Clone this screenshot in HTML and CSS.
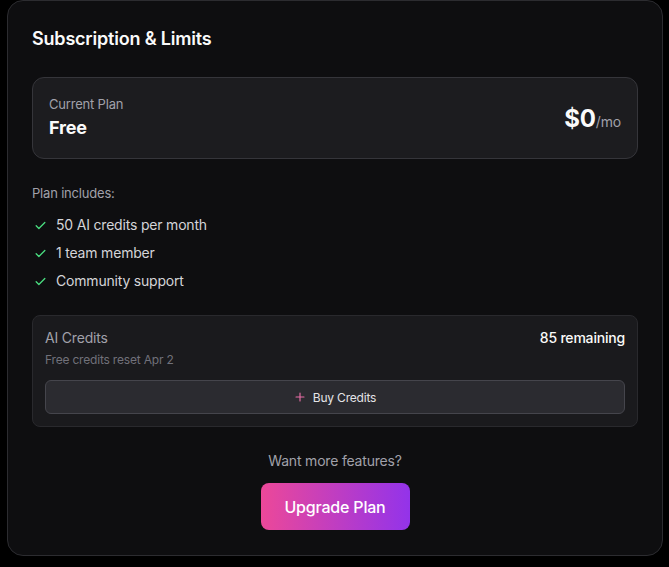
FILE: index.html
```html
<!DOCTYPE html>
<html lang="en">
<head>
  <meta charset="UTF-8" />
  <title>Subscription &amp; Limits</title>
  <link rel="stylesheet" href="styles.css">
</head>
<body>
  <div class="card">
    <h2 class="card-title">Subscription &amp; Limits</h2>

    <!-- current plan -->
    <div class="plan">
      <div>
        <div class="plan-label">Current Plan</div>
        <div class="plan-name">Free</div>
      </div>
      <div class="plan-price">$0<span>/mo</span></div>
    </div>

    <!-- features -->
    <p class="includes">Plan includes:</p>
    <ul class="features">
      <li>
        <svg viewBox="0 0 24 24" width="13" height="13"><path d="M4 12.5l5 5L20 6.5" /></svg>
        50 AI credits per month
      </li>
      <li>
        <svg viewBox="0 0 24 24" width="13" height="13"><path d="M4 12.5l5 5L20 6.5" /></svg>
        1 team member
      </li>
      <li>
        <svg viewBox="0 0 24 24" width="13" height="13"><path d="M4 12.5l5 5L20 6.5" /></svg>
        Community support
      </li>
    </ul>

    <!-- credits -->
    <div class="credits">
      <div class="credits-head">
        <span class="credits-label">AI Credits</span>
        <span class="credits-left">85 remaining</span>
      </div>
      <div class="credits-note">Free credits reset Apr 2</div>
      <button class="buy">
        <svg viewBox="0 0 24 24" width="12" height="12"><path d="M12 4v16M4 12h16" /></svg>
        Buy Credits
      </button>
    </div>

    <div class="upgrade">
      <p>Want more features?</p>
      <button class="upgrade-btn">Upgrade Plan</button>
    </div>
  </div>
</body>
</html>
```

FILE: styles.css
```css
* {
  box-sizing: border-box;
}

body {
  margin: 0;
  padding: 0 6px 0 7px;
  background: #000;
  font-family: Inter, "Noto Sans", sans-serif;
  letter-spacing: -0.012em;
  color: #fafafa;
}

.card {
  background: #0e0e10;
  border: 1px solid #2c2c30;
  border-radius: 16px;
  padding: 24px;
  height: 556px;
}

.card-title {
  margin: 0;
  font-size: 18px;
  line-height: 28px;
  font-weight: 600;
}

.plan {
  margin-top: 24px;
  background: #1c1c1f;
  border: 1px solid #35353a;
  border-radius: 12px;
  padding: 16px;
  display: flex;
  align-items: center;
  justify-content: space-between;
}

.plan-label {
  font-size: 13px;
  line-height: 20px;
  color: #a1a1aa;
}

.plan-name {
  font-size: 18px;
  line-height: 28px;
  font-weight: 700;
}

.plan-price {
  font-size: 24px;
  font-weight: 700;
}

.plan-price span {
  font-size: 14px;
  font-weight: 400;
  color: #a1a1aa;
}

.includes {
  margin: 24px 0 0;
  font-size: 13px;
  line-height: 20px;
  color: #a1a1aa;
}

.features {
  list-style: none;
  margin: 12px 0 0;
  padding: 0;
  display: flex;
  flex-direction: column;
  gap: 8px;
}

.features li {
  display: flex;
  align-items: center;
  gap: 9px;
  padding-left: 2px;
  font-size: 14px;
  line-height: 20px;
  color: #d4d4d8;
}

.features svg {
  fill: none;
  stroke: #4ade80;
  stroke-width: 2.4;
  stroke-linecap: round;
  stroke-linejoin: round;
}

.credits {
  margin-top: 24px;
  background: #1a1a1d;
  border: 1px solid #29292d;
  border-radius: 8px;
  padding: 12px;
}

.credits-head {
  display: flex;
  justify-content: space-between;
  font-size: 14px;
  line-height: 20px;
}

.credits-label {
  color: #a1a1aa;
}

.credits-left {
  color: #fafafa;
  font-weight: 500;
}

.credits-note {
  margin-top: 4px;
  font-size: 12px;
  line-height: 16px;
  color: #71717a;
}

.buy {
  margin-top: 12px;
  width: 100%;
  height: 34px;
  display: flex;
  align-items: center;
  justify-content: center;
  gap: 7px;
  background: #2b2b30;
  border: 1px solid #45454c;
  border-radius: 6px;
  font-family: inherit;
  letter-spacing: inherit;
  font-size: 12px;
  color: #e4e4e7;
  cursor: pointer;
}

.buy svg {
  stroke: #ec6fa8;
  stroke-width: 2.2;
  stroke-linecap: round;
}

.upgrade {
  margin-top: 24px;
  display: flex;
  flex-direction: column;
  align-items: center;
}

.upgrade p {
  margin: 0;
  font-size: 14px;
  line-height: 20px;
  color: #a1a1aa;
}

.upgrade-btn {
  margin-top: 12px;
  width: 149px;
  height: 47px;
  border: none;
  border-radius: 8px;
  background: linear-gradient(90deg, #ec4899, #9333ea);
  color: #fff;
  font-family: inherit;
  letter-spacing: inherit;
  font-size: 16px;
  font-weight: 500;
  cursor: pointer;
}
```
